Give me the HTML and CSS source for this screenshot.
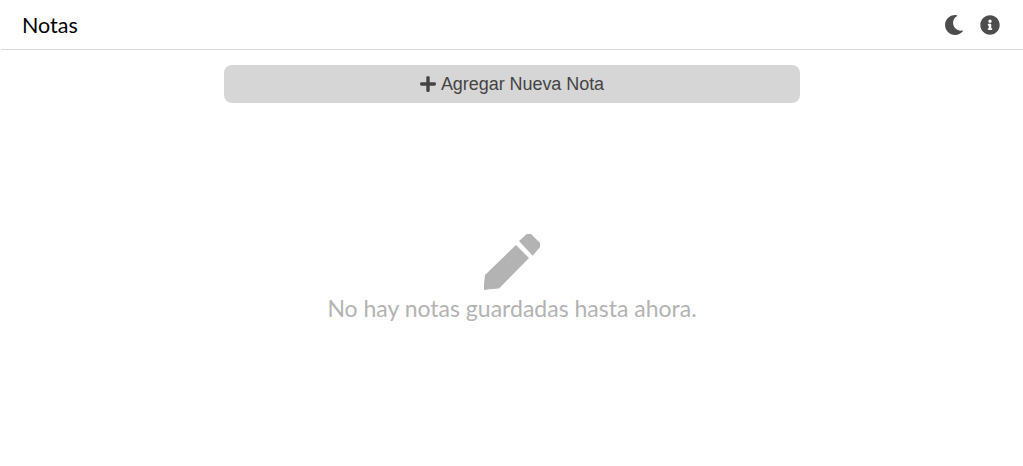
FILE: index.html
```html
<!DOCTYPE html>
<html lang="es">
<head>
    <meta charset="UTF-8">
    <meta name="viewport" content="width=device-width, initial-scale=1.0">
    <title>Notas</title>
    <link rel="stylesheet" href="styles.css">
</head>
<body>
    <header class="top-bar">
        <h1 class="top-title">Notas</h1>
        <div class="top-actions">
            <svg class="top-icon" viewBox="0 0 512 512" aria-label="Modo oscuro"><path d="M283.211 512c78.962 0 151.079-35.925 198.857-94.792 7.068-8.708-.639-21.43-11.562-19.35-124.2 23.654-238.25-71.576-238.25-196.954 0-72.222 38.662-138.635 101.498-174.394 9.686-5.512 7.25-20.197-3.756-22.23A258.156 258.156 0 0 0 283.211 0c-141.309 0-256 114.511-256 256 0 141.309 114.511 256 256 256z"/></svg>
            <svg class="top-icon" viewBox="0 0 512 512" aria-label="Información"><path d="M256 8C119.043 8 8 119.083 8 256c0 136.997 111.043 248 248 248s248-111.003 248-248C504 119.083 392.957 8 256 8zm0 110c23.196 0 42 18.804 42 42s-18.804 42-42 42-42-18.804-42-42 18.804-42 42-42zm56 254c0 6.627-5.373 12-12 12h-88c-6.627 0-12-5.373-12-12v-24c0-6.627 5.373-12 12-12h12v-64h-12c-6.627 0-12-5.373-12-12v-24c0-6.627 5.373-12 12-12h64c6.627 0 12 5.373 12 12v100h12c6.627 0 12 5.373 12 12v24z"/></svg>
        </div>
    </header>

    <main class="notes">
        <button class="add-button">
            <svg class="add-icon" viewBox="0 0 448 512"><path d="M416 208H272V64c0-17.67-14.33-32-32-32h-32c-17.67 0-32 14.33-32 32v144H32c-17.67 0-32 14.33-32 32v32c0 17.67 14.33 32 32 32h144v144c0 17.67 14.33 32 32 32h32c17.67 0 32-14.33 32-32V304h144c17.67 0 32-14.33 32-32v-32c0-17.67-14.33-32-32-32z"/></svg>
            Agregar Nueva Nota
        </button>

        <div class="empty-message">
            <svg class="empty-icon" viewBox="0 0 57 57"><path d="M1 42 32 12 45 25 15 55.5 8 56 0 57V51Z"/><path d="M35 8 42.7 1H47L56 10V14L48.7 22.7Z"/></svg>
            <p class="empty-text">No hay notas guardadas hasta ahora.</p>
        </div>
    </main>
</body>
</html>
```

FILE: styles.css
```css
* {
    margin: 0;
    padding: 0;
    box-sizing: border-box;
}

body {
    margin-left: 1px;
    background-color: #fff;
    color: #000;
    font-family: 'Lato', sans-serif;
}

.top-bar {
    height: 50px;
    padding: 0 23px 0 21px;
    display: flex;
    align-items: center;
    justify-content: space-between;
    border-bottom: 1px solid #d8d8d8;
}

.top-title {
    font-size: 21.5px;
    font-weight: 400;
}

.top-actions {
    display: flex;
    align-items: center;
    gap: 16px;
}

.top-icon {
    width: 20px;
    height: 20px;
    fill: #4d4d4d;
}

.notes {
    display: flex;
    flex-direction: column;
    align-items: center;
    padding-top: 15px;
}

.add-button {
    width: 576px;
    height: 38px;
    display: flex;
    align-items: center;
    justify-content: center;
    gap: 5px;
    background-color: #d6d6d6;
    color: #444;
    border: none;
    border-radius: 8px;
    font-family: 'Liberation Sans', Arial, sans-serif;
    font-size: 18px;
    letter-spacing: -0.05px;
}

.add-icon {
    width: 16px;
    height: 18px;
    fill: #444;
}

.empty-message {
    margin-top: 130px;
    display: flex;
    flex-direction: column;
    align-items: center;
    color: #b3b3b3;
}

.empty-icon {
    width: 57px;
    height: 57px;
    fill: #b3b3b3;
}

.empty-text {
    font-size: 23px;
    line-height: 36px;
}
```
